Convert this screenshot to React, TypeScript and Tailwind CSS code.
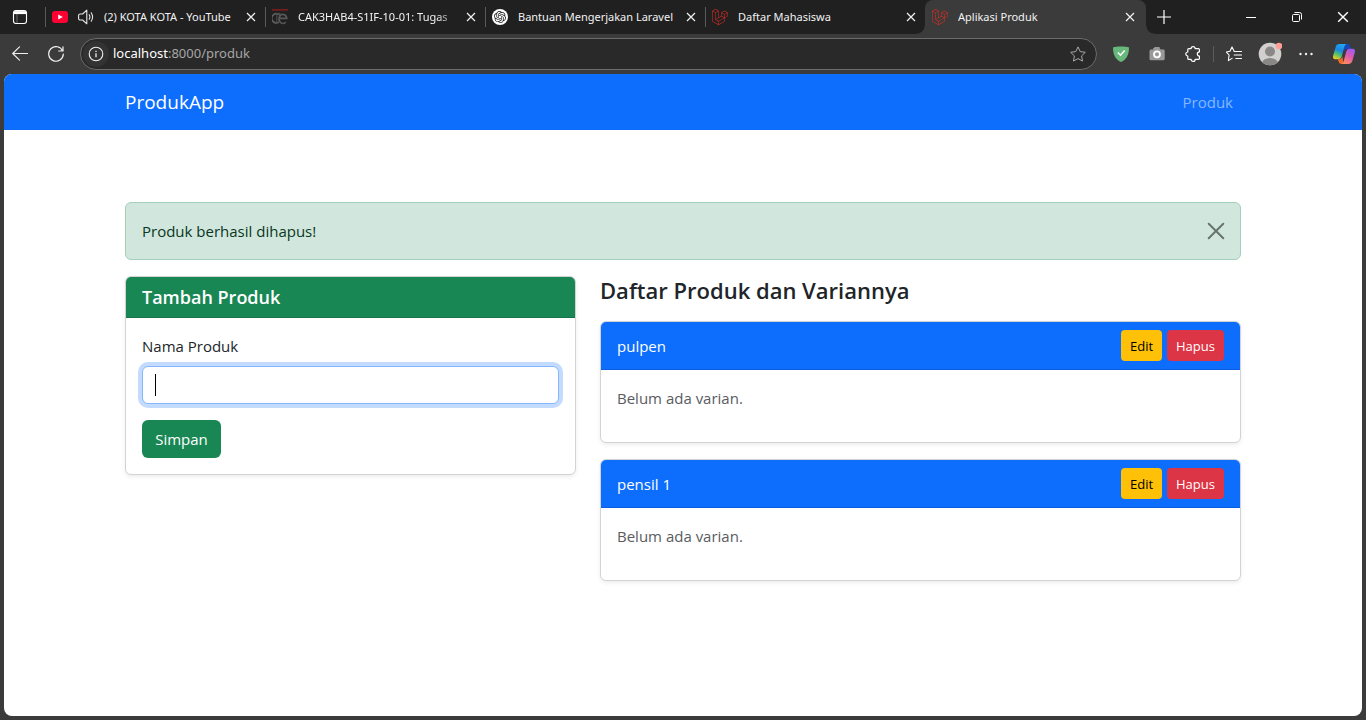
import { useState, type ReactNode } from 'react';
import { SiLaravel, SiOpenai } from 'react-icons/si';

function CloseGlyph({ className }: { className: string }) {
  return (
    <svg viewBox="0 0 10 10" className={className} fill="none" stroke="currentColor" strokeWidth="1.2" aria-hidden="true">
      <path d="M1 1l8 8M9 1l-8 8" />
    </svg>
  );
}

function YoutubeIcon() {
  return (
    <svg viewBox="0 0 16 16" className="size-4 shrink-0">
      <rect x="0" y="2" width="16" height="12" rx="3" fill="#ff0033" />
      <path d="M6.2 5.4v5.2L10.8 8z" fill="#fff" />
    </svg>
  );
}

function SpeakerIcon() {
  return (
    <svg viewBox="0 0 16 16" className="size-4" fill="none" stroke="#e8e8e8" strokeWidth="1.1" strokeLinejoin="round" strokeLinecap="round">
      <path d="M8.8 1.2v13.6L4.6 11H2.2A1.6 1.6 0 0 1 .6 9.400V6.600A1.600 1.600 0 0 1 2.200 5h2.400z" />
      <path d="M11.200 5.700a4.500 4.500 0 0 1 0 4.600M13.200 3.800a7.600 7.600 0 0 1 0 8.400" />
    </svg>
  );
}

function CampusIcon() {
  return (
    <svg viewBox="0 0 16 16" className="size-4 shrink-0" fill="none">
      <path d="M0 .9h16" stroke="#7d1d1d" strokeWidth="1.600" />
      <path d="M7 5.500A4.600 4.600 0 1 0 7 13.100" stroke="#5f5f5f" strokeWidth="1.700" />
      <path d="M4.800 4v11" stroke="#4c4c4c" strokeWidth="1.200" />
      <path d="M7.800 9.400h7A3.900 4.600 0 1 0 13.800 13" stroke="#585858" strokeWidth="1.700" />
      <path d="M7.800 3.800v4" stroke="#555" strokeWidth="1.200" />
    </svg>
  );
}

function OpenAiIcon() {
  return (
    <span className="flex size-4 shrink-0 items-center justify-center rounded-full bg-white">
      <SiOpenai className="size-3 text-[#222222]" />
    </span>
  );
}

function LaravelIcon() {
  return <SiLaravel className="size-4 shrink-0 text-[#e82c22]" />;
}

type Tab = { title: string; icon: ReactNode; audio?: boolean; fade?: boolean };

const tabs: Tab[] = [
  { title: '(2) KOTA KOTA - YouTube', icon: <YoutubeIcon />, audio: true },
  { title: 'CAK3HAB4-S1IF-10-01: Tugas', icon: <CampusIcon />, fade: true },
  { title: 'Bantuan Mengerjakan Laravel', icon: <OpenAiIcon /> },
  { title: 'Daftar Mahasiswa', icon: <LaravelIcon /> },
];

function TabContent({ tab }: { tab: Tab }) {
  return (
    <>
      {tab.icon}
      {tab.audio && (
        <button type="button" aria-label="Mute tab" className="ml-2.5 shrink-0">
          <SpeakerIcon />
        </button>
      )}
      <span
        className={
          'ml-2.5 min-w-0 flex-1 overflow-hidden whitespace-nowrap ' +
          (tab.fade ? '[mask-image:linear-gradient(to_right,#000_85%,transparent)]' : '')
        }
      >
        {tab.title}
      </span>
      <button type="button" aria-label="Close tab" className="flex size-5 shrink-0 items-center justify-center">
        <CloseGlyph className="size-2.5" />
      </button>
    </>
  );
}

function TabStrip() {
  return (
    <div className="flex h-[34px] bg-[#202020] font-['Noto_Sans',sans-serif] text-[11px] text-[#f2f2f2]">
      <button type="button" aria-label="Tab actions" className="flex w-[45px] shrink-0 items-center pl-3">
        <svg viewBox="0 0 16 16" className="size-4" fill="none" stroke="#fff">
          <rect x="1.500" y="1.500" width="13" height="13" rx="2.500" strokeWidth="1.100" />
          <path d="M2 3.600h12" strokeWidth="3" />
          <path d="M5 5v9" strokeWidth="1" strokeOpacity=".35" />
        </svg>
      </button>
      {tabs.map((tab) => (
        <div key={tab.title} className="flex w-[220px] min-w-0 items-center">
          <span className="h-5 w-px shrink-0 bg-[#5a5a5a]" />
          <div className="flex h-8 min-w-0 flex-1 items-center pr-1 pl-1.5">
            <TabContent tab={tab} />
          </div>
        </div>
      ))}
      <div className="relative flex w-[221px] min-w-0 items-center rounded-t-lg bg-[#3b3b3b] pr-1.5 pl-[7px]">
        <span className="absolute bottom-0 -left-2 size-2 bg-[radial-gradient(circle_at_0_0,#202020_7px,#3b3b3b_8px)]" />
        <TabContent tab={{ title: 'Aplikasi Produk', icon: <LaravelIcon /> }} />
        <span className="absolute -right-2 bottom-0 size-2 bg-[radial-gradient(circle_at_100%_0,#202020_7px,#3b3b3b_8px)]" />
      </div>
      <button type="button" aria-label="New tab" className="flex w-9 shrink-0 items-center justify-center">
        <svg viewBox="0 0 14 14" className="size-3.5" stroke="#fff" strokeWidth="1.200">
          <path d="M7 0v14M0 7h14" />
        </svg>
      </button>
      <div className="ml-auto flex shrink-0">
        <button type="button" aria-label="Minimize" className="flex w-[46px] items-center justify-center">
          <span className="h-px w-2.5 bg-white" />
        </button>
        <button type="button" aria-label="Restore" className="flex w-[46px] items-center justify-center">
          <svg viewBox="0 0 10 10" className="size-2.5" fill="none" stroke="#fff">
            <rect x=".5" y="2.500" width="7" height="7" rx="1" />
            <path d="M2.500.5h5a2 2 0 0 1 2 2v5" />
          </svg>
        </button>
        <button type="button" aria-label="Close" className="flex w-[46px] items-center justify-center text-white">
          <CloseGlyph className="size-3" />
        </button>
      </div>
    </div>
  );
}

function ToolButton({ label, children }: { label: string; children: ReactNode }) {
  return (
    <button type="button" aria-label={label} className="flex h-8 w-9 shrink-0 items-center justify-center">
      {children}
    </button>
  );
}

function CopilotIcon() {
  return (
    <svg viewBox="0 0 24 22" className="h-[22px] w-6">
      <defs>
        <linearGradient id="cpLeft" x1="0.600" y1="0" x2="0.200" y2="1">
          <stop offset="0" stopColor="#1fa8f0" />
          <stop offset=".4" stopColor="#1c86e8" />
          <stop offset=".65" stopColor="#45bd78" />
          <stop offset="1" stopColor="#f5cf1c" />
        </linearGradient>
        <linearGradient id="cpRight" x1="0.800" y1="0" x2="0.300" y2="1">
          <stop offset="0" stopColor="#9a5cf0" />
          <stop offset=".45" stopColor="#dc58b4" />
          <stop offset="1" stopColor="#ff8a5c" />
        </linearGradient>
      </defs>
      <path d="M12 1h3.600c1.600 0 2.300.9 2.800 2.500l.8 2.500H15c-1.800 0-2.600 1-3 2.500z" fill="#1747b8" />
      <path d="M7.500 1H15c-1.600 0-2.300 1.400-2.800 3.200L10 12.500c-.6 2.300-1.500 3.700-3.800 3.700H3.300C1 16.200.7 14.400 1.200 12.500L3.600 4.200C4.200 2.200 5.300 1 7.500 1z" fill="url(#cpLeft)" />
      <path d="M5.500 16.200h2c1.500 0 2.400-1.200 3-3l1 7.800H9.600c-2 0-2.600-1.200-3.100-2.700z" fill="#f06a28" />
      <path d="M16.500 21H9c1.600 0 2.300-1.400 2.800-3.200L14 9.500c.6-2.300 1.500-3.700 3.800-3.700h2.900c2.300 0 2.600 1.800 2.100 3.700l-2.400 8.300c-.6 2-1.700 3.200-3.900 3.200z" fill="url(#cpRight)" />
    </svg>
  );
}

function Toolbar() {
  return (
    <div className="flex h-10 items-center bg-[#3b3b3b] pr-1 pl-0.5">
      <ToolButton label="Back">
        <svg viewBox="0 0 16 16" className="size-4" fill="none" stroke="#f0f0f0" strokeWidth="1.100" strokeLinecap="round" strokeLinejoin="round">
          <path d="M15.500 7.500H.700M7.500.900L.700 7.500l6.800 6.600" />
        </svg>
      </ToolButton>
      <ToolButton label="Refresh">
        <svg viewBox="0 0 16 16" className="size-4" fill="none" stroke="#f0f0f0" strokeWidth="1.200" strokeLinecap="round" strokeLinejoin="round">
          <path d="M14.700 5A7.300 7.300 0 1 0 15.300 8M15 .8V5h-4.300" />
        </svg>
      </ToolButton>
      <div className="ml-1.5 flex h-8 min-w-0 flex-1 items-center rounded-full border border-[#6b6b6b] bg-[#292929] pr-2.5 pl-0.5">
        <button type="button" aria-label="View site information" className="flex size-[26px] shrink-0 items-center justify-center rounded-full bg-[#333333]">
          <svg viewBox="0 0 16 16" className="size-4" fill="none" stroke="#f0f0f0" strokeWidth="1.100">
            <circle cx="8" cy="8" r="6.800" />
            <path d="M8 7.200v4M8 4.700v1.200" strokeWidth="1.300" />
          </svg>
        </button>
        <a href="http://localhost:8000/produk" className="ml-1 min-w-0 flex-1 truncate font-['Noto_Sans',sans-serif] text-[13px] text-[#a6a6a6]">
          <span className="text-white">localhost</span>:8000/produk
        </a>
        <button type="button" aria-label="Add to favorites" className="shrink-0">
          <svg viewBox="0 0 16 16" className="size-4" fill="none" stroke="#a8a8a8" strokeLinejoin="round">
            <path d="M8 .9l2.200 4.700 5.100.7-3.700 3.600.9 5.200L8 12.600l-4.500 2.500.9-5.200L.7 6.300l5.100-.7z" />
          </svg>
        </button>
      </div>
      <div className="ml-1.5 flex shrink-0 items-center">
        <ToolButton label="Ad blocker">
          <svg viewBox="0 0 16 16" className="size-4">
            <path d="M0 1.500C3 .1 13 .1 16 1.500 16 8 14 13.500 8 16 2 13.500 0 8 0 1.500z" fill="#68b87c" />
            <path d="M4.800 6.500l2.700 2.700 4.200-4.600" fill="none" stroke="#fff" strokeWidth="1.500" />
          </svg>
        </ToolButton>
        <ToolButton label="Screenshot">
          <svg viewBox="0 0 16 16" className="size-4">
            <path d="M1.500 3.500h2.700V2h1.200V1h5.200v1.200l1.200 1.300h2.700c.7 0 1.200.6 1.200 1.200v8.300c0 .7-.5 1.200-1.200 1.200H1.700C1 14.200.5 13.700.5 13V4.700z" fill="#999" />
            <circle cx="8" cy="8.300" r="3" fill="none" stroke="#fff" strokeWidth="1.800" />
          </svg>
        </ToolButton>
        <ToolButton label="Extensions">
          <svg viewBox="0 0 16 16" className="size-4" fill="none" stroke="#fff" strokeWidth="1.200" strokeLinejoin="round">
            <path d="M3.800 2.600h2.300a2 2 0 0 1 4 0h3.300a1 1 0 0 1 1 1v2.300a2.100 2.100 0 1 0 0 4.200v2.300a1 1 0 0 1-1 1h-3.300a2 2 0 0 1-4 0H3.800a1 1 0 0 1-1-1v-2.400a2 2 0 0 1 0-4V3.600a1 1 0 0 1 1-1z" />
          </svg>
        </ToolButton>
        <span className="mx-0.5 h-4 w-px bg-[#5c5c5c]" />
        <ToolButton label="Favorites">
          <svg viewBox="0 0 16 16" className="size-4" fill="none" stroke="#fff" strokeWidth="1.100" strokeLinejoin="round" strokeLinecap="round">
            <path d="M8.300 5.500L6 .9 4 5.300l-3.600.7L3.100 9l-.7 5.600 3.700-2.200" />
            <path d="M8.300 5.500h7.200M8.200 9h7.300M9.800 12.500h5.700" />
          </svg>
        </ToolButton>
        <ToolButton label="Profile">
          <svg viewBox="0 0 24 24" className="size-6">
            <defs>
              <clipPath id="avatarClip">
                <circle cx="12" cy="12" r="11.300" />
              </clipPath>
            </defs>
            <circle cx="12" cy="12" r="11.300" fill="#d2d0ce" />
            <g clipPath="url(#avatarClip)" fill="#8a8886">
              <circle cx="12" cy="9.500" r="5" />
              <ellipse cx="12" cy="21.500" rx="8" ry="5.500" />
            </g>
            <circle cx="21" cy="4" r="3.300" fill="#ff9e96" />
          </svg>
        </ToolButton>
        <ToolButton label="Settings and more">
          <svg viewBox="0 0 16 16" className="size-4" fill="#f0f0f0">
            <circle cx="2.500" cy="8" r="1.200" />
            <circle cx="8" cy="8" r="1.200" />
            <circle cx="13.500" cy="8" r="1.200" />
          </svg>
        </ToolButton>
        <div className="ml-0.5 flex">
          <ToolButton label="Copilot">
            <CopilotIcon />
          </ToolButton>
        </div>
      </div>
    </div>
  );
}

function ProductCard({ name }: { name: string }) {
  return (
    <article className="mb-4 rounded-md border border-[#d3d3d3] bg-white shadow-[0_2px_4px_rgba(0,0,0,0.075)]">
      <header className="flex items-center justify-between rounded-t-[5px] border-b border-[#0b5fdc] bg-[#0d6efd] px-4 py-2 text-white">
        <span>{name}</span>
        <div className="flex gap-[5px] text-[13px]">
          <button type="button" className="h-[31px] min-w-[41px] rounded bg-[#ffc107] text-black">
            Edit
          </button>
          <button type="button" className="h-[31px] min-w-[57px] rounded bg-[#dc3545] text-white">
            Hapus
          </button>
        </div>
      </header>
      <div className="px-4 pt-4 pb-8">
        <p className="text-[#595c5f]">Belum ada varian.</p>
      </div>
    </article>
  );
}

export default function App() {
  const [name, setName] = useState('');
  const [showAlert, setShowAlert] = useState(true);
  return (
    <div className="flex min-h-screen flex-col bg-[#3a3735] font-['Open_Sans','Noto_Sans',sans-serif]">
      <TabStrip />
      <Toolbar />
      <div className="-mt-px flex flex-1 flex-col bg-[#3b3b3b] px-1 pt-px pb-1">
        <div className="flex-1 overflow-hidden rounded-lg bg-white text-[15px] leading-6 text-[#212529]">
          <nav className="bg-[#0d6efd]">
            <div className="mx-auto flex h-14 max-w-[1140px] items-center justify-between px-3">
              <a href="#" className="text-[19px] text-white">
                ProdukApp
              </a>
              <a href="#produk" className="px-2 text-[#86b7fe]">
                Produk
              </a>
            </div>
          </nav>
          <main className="mx-auto mt-[72px] max-w-[1140px] px-3">
            {showAlert && (
              <div role="alert" className="mb-4 flex items-center justify-between rounded-md border border-[#a3cfbb] bg-[#d1e7dd] p-4 text-[#0a3622]">
                Produk berhasil dihapus!
                <button type="button" aria-label="Close" onClick={() => setShowAlert(false)} className="text-[#687370]">
                  <svg viewBox="0 0 16 16" className="size-4" overflow="visible" stroke="currentColor" strokeWidth="2" strokeLinecap="round">
                    <path d="M.7.700l14.600 14.600M15.300.700L.700 15.300" />
                  </svg>
                </button>
              </div>
            )}
            <div className="grid grid-cols-12 items-start">
              <section className="col-span-12 rounded-md border border-[#d3d3d3] bg-white shadow-[0_2px_4px_rgba(0,0,0,0.075)] md:col-span-5 md:mr-[14px]">
                <h5 className="rounded-t-[5px] border-b border-[#16754a] bg-[#198754] px-4 py-2 text-[18px] font-semibold text-white">
                  Tambah Produk
                </h5>
                <form className="p-4" onSubmit={(e) => e.preventDefault()}>
                  <label htmlFor="nama" className="mb-2 block">
                    Nama Produk
                  </label>
                  <div className="relative mb-4">
                    <input
                      id="nama"
                      type="text"
                      value={name}
                      onChange={(e) => setName(e.target.value)}
                      className="block h-[38px] w-full rounded-md border border-[#86b7fe] bg-white px-3 shadow-[0_0_0_4px_#c2dbfe] outline-none"
                    />
                    {name === '' && <span className="pointer-events-none absolute top-2 left-[13px] h-[22px] w-px bg-black" />}
                  </div>
                  <button type="submit" className="block h-[38px] min-w-[79px] rounded-md bg-[#198754] px-3 text-white">
                    Simpan
                  </button>
                </form>
              </section>
              <section className="col-span-12 md:col-span-7 md:ml-[10px]">
                <h4 className="mb-4 text-[22px] leading-[29px] font-semibold">Daftar Produk dan Variannya</h4>
                <ProductCard name="pulpen" />
                <ProductCard name="pensil 1" />
              </section>
            </div>
          </main>
        </div>
      </div>
    </div>
  );
}
